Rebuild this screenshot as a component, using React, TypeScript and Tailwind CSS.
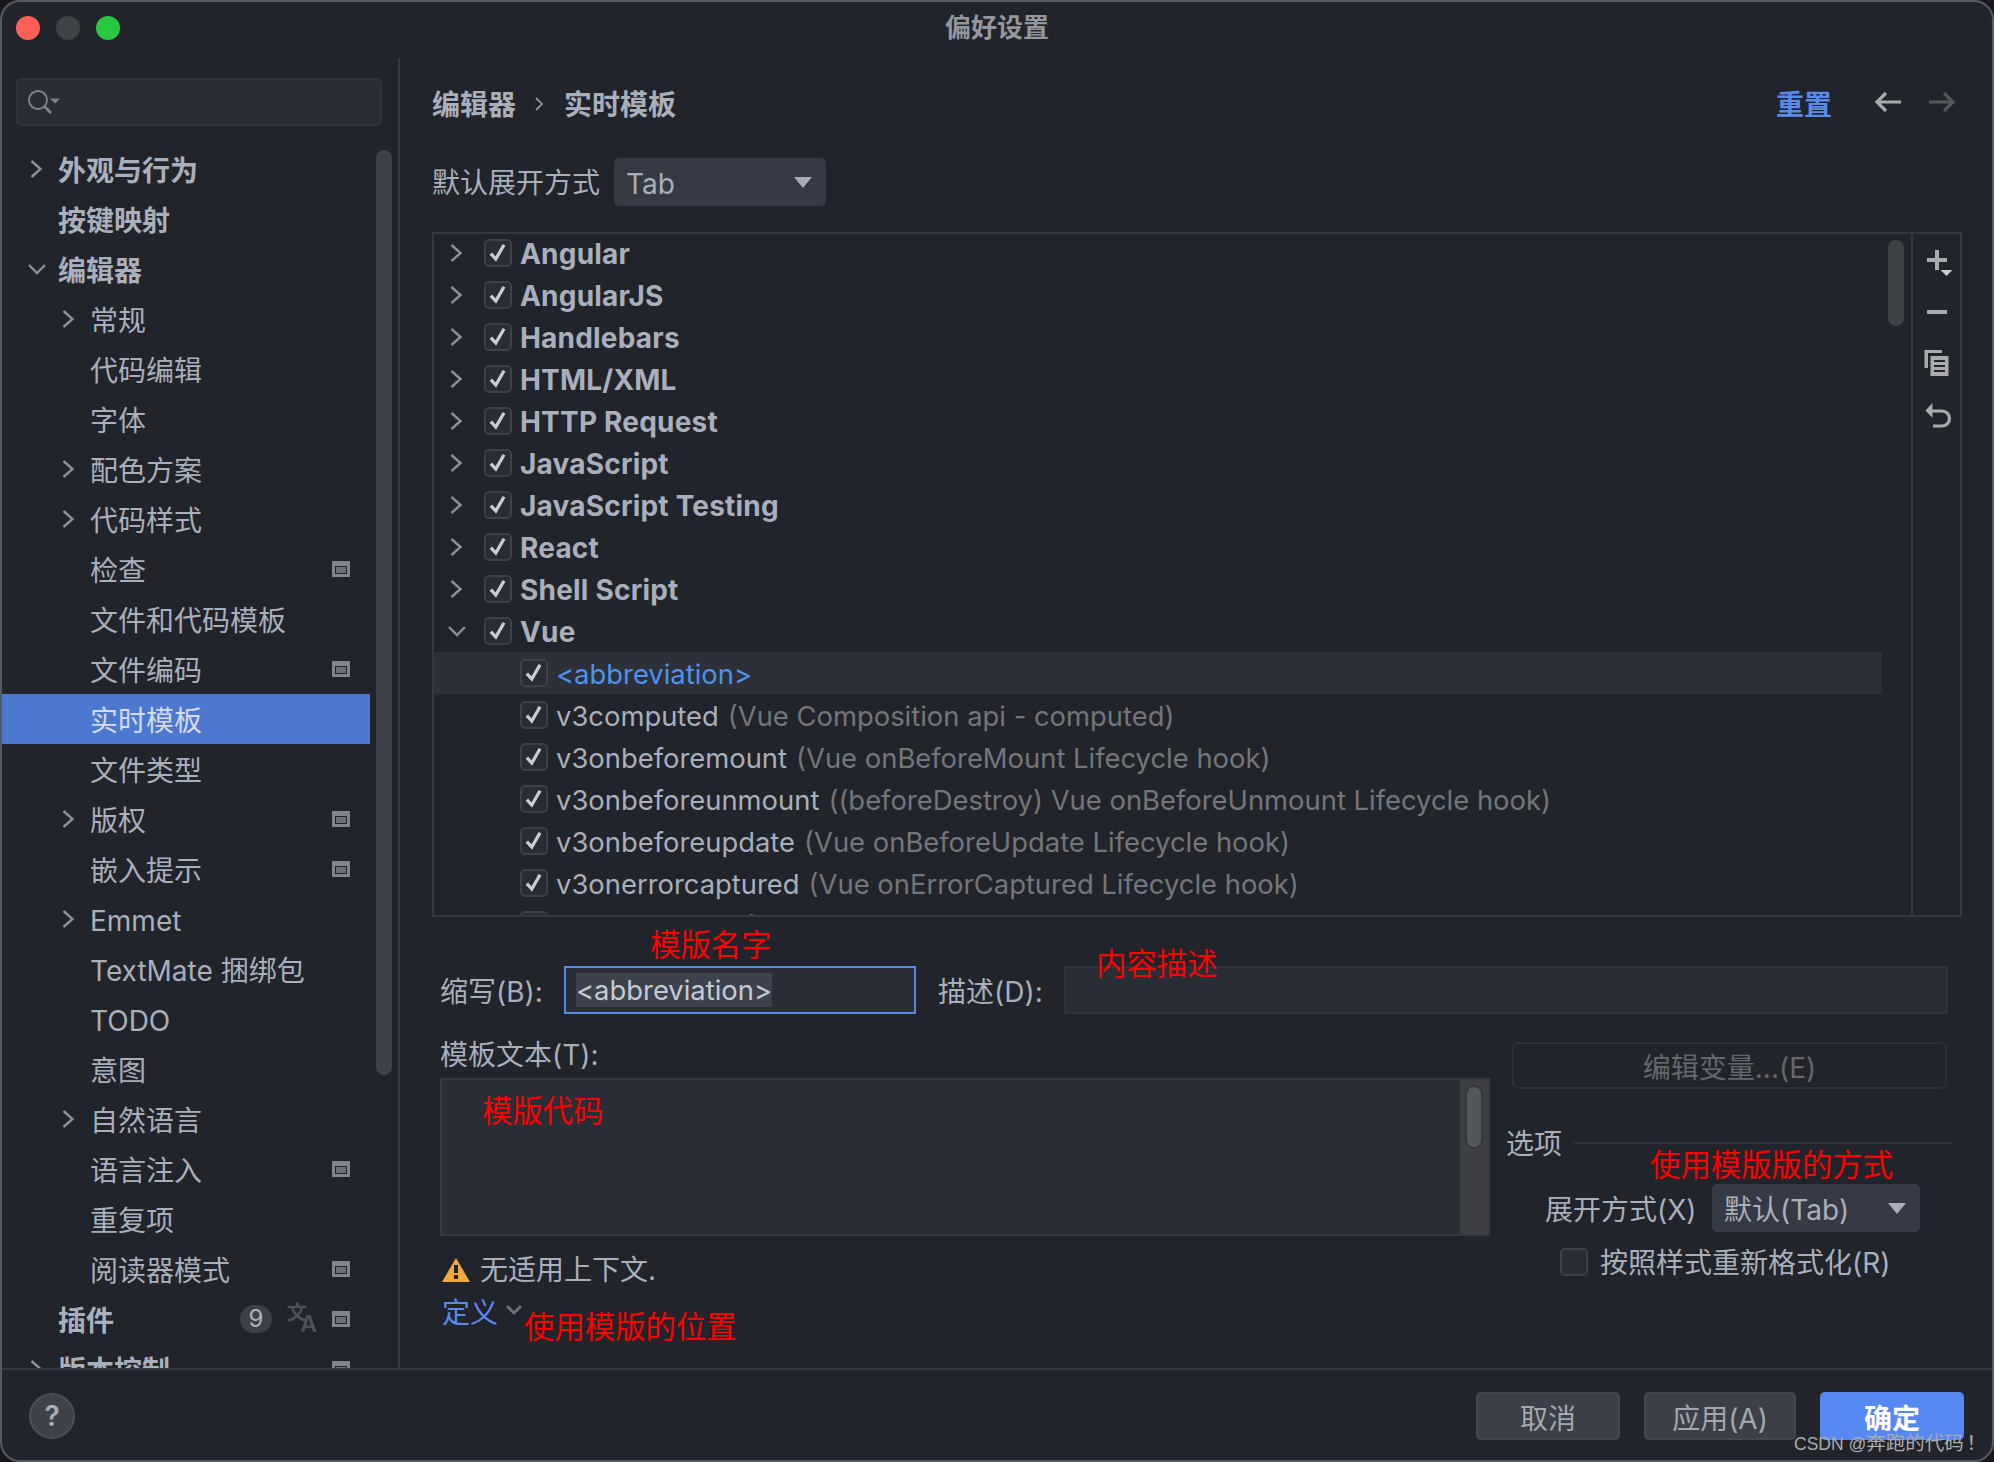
import React from 'react';

const ChevR = ({ c = '#8d9096' }: { c?: string }) => (
  <svg width="20" height="20" viewBox="0 0 20 20" fill="none" stroke={c} strokeWidth="2.4"><path d="M4.5 2 L13.5 10 L4.5 18" /></svg>
);
const ChevD = () => (
  <svg width="20" height="20" viewBox="0 0 20 20" fill="none" stroke="#8d9096" strokeWidth="2.4"><path d="M2 6 L10 14 L18 6" /></svg>
);
const Mark = () => (
  <svg width="18" height="16" viewBox="0 0 18 16"><rect width="18" height="16" fill="#7f848d" /><rect x="3" y="5" width="12" height="8" fill="#21242b" /><rect x="4" y="6" width="10" height="6" fill="#6b707a" /></svg>
);
const Check = ({ on = true }: { on?: boolean }) => (
  <span className="flex h-[28px] w-[28px] shrink-0 items-center justify-center rounded-[5px] border-2 border-[#3c414c] bg-[#282c35]">
    {on && (
      <svg width="22" height="22" viewBox="0 0 20 20" fill="none" stroke="#c8ccd4" strokeWidth="3"><path d="M3.5 10.5 L8 15.5 L15.5 2.5" /></svg>
    )}
  </span>
);
const Tri = () => (
  <svg width="18" height="12" viewBox="0 0 18 12" className="mt-[2px]"><path d="M0 0 H18 L9 11 Z" fill="#a9aeb8" /></svg>
);

type Side = { t: string; l: number; c?: 'r' | 'd'; b?: boolean; m?: boolean; sel?: boolean; extra?: boolean };
const side: Side[] = [
  { t: '外观与行为', l: 0, c: 'r', b: true },
  { t: '按键映射', l: 0, b: true },
  { t: '编辑器', l: 0, c: 'd', b: true },
  { t: '常规', l: 1, c: 'r' },
  { t: '代码编辑', l: 1 },
  { t: '字体', l: 1 },
  { t: '配色方案', l: 1, c: 'r' },
  { t: '代码样式', l: 1, c: 'r' },
  { t: '检查', l: 1, m: true },
  { t: '文件和代码模板', l: 1 },
  { t: '文件编码', l: 1, m: true },
  { t: '实时模板', l: 1, sel: true },
  { t: '文件类型', l: 1 },
  { t: '版权', l: 1, c: 'r', m: true },
  { t: '嵌入提示', l: 1, m: true },
  { t: 'Emmet', l: 1, c: 'r' },
  { t: 'TextMate 捆绑包', l: 1 },
  { t: 'TODO', l: 1 },
  { t: '意图', l: 1 },
  { t: '自然语言', l: 1, c: 'r' },
  { t: '语言注入', l: 1, m: true },
  { t: '重复项', l: 1 },
  { t: '阅读器模式', l: 1, m: true },
  { t: '插件', l: 0, b: true, m: true, extra: true },
  { t: '版本控制', l: 0, c: 'r', b: true, m: true },
];

const groups = ['Angular', 'AngularJS', 'Handlebars', 'HTML/XML', 'HTTP Request', 'JavaScript', 'JavaScript Testing', 'React', 'Shell Script'];
const children: [string, string][] = [
  ['v3computed', '(Vue Composition api - computed)'],
  ['v3onbeforemount', '(Vue onBeforeMount Lifecycle hook)'],
  ['v3onbeforeunmount', '((beforeDestroy) Vue onBeforeUnmount Lifecycle hook)'],
  ['v3onbeforeupdate', '(Vue onBeforeUpdate Lifecycle hook)'],
  ['v3onerrorcaptured', '(Vue onErrorCaptured Lifecycle hook)'],
  ['v3onmounted', '(Vue onMounted Lifecycle hook)'],
];

const Red = ({ className, children: c }: { className: string; children: React.ReactNode }) => (
  <span className={`absolute whitespace-nowrap text-[30.4px] leading-[40px] text-[#ff0000] ${className}`}>{c}</span>
);

export default function App() {
  return (
    <div className="relative h-[1462px] w-[1994px] overflow-hidden bg-[#17181c] font-['Inter','Noto_Sans_CJK_SC',sans-serif] text-[#a9afbb]">
      <div className="flex h-full flex-col overflow-hidden rounded-[20px] border-2 border-[#56595f] bg-[#21242b]">
        {/* title */}
        <div className="grid h-[56px] shrink-0 grid-cols-3 items-center pb-[4px]">
          <div className="flex gap-[16px] pl-[14px]">
            <span className="h-[24px] w-[24px] rounded-full bg-[#ff5f57]" />
            <span className="h-[24px] w-[24px] rounded-full bg-[#404348]" />
            <span className="h-[24px] w-[24px] rounded-full bg-[#28c840]" />
          </div>
          <div className="text-center text-[26px] font-semibold leading-[50px] text-[#94979e]">偏好设置</div>
        </div>

        {/* body */}
        <div className="flex min-h-0 flex-1 border-b-2 border-[#363941]">
          {/* sidebar */}
          <aside className="flex w-[398px] shrink-0 flex-col overflow-hidden border-r-2 border-[#363941]">
            <div className="mx-[14px] mt-[20px] flex h-[48px] w-[366px] shrink-0 items-center rounded-[5px] border-2 border-[#2f333b] bg-[#292d35] pl-[8px]">
              <svg width="36" height="28" viewBox="0 0 36 28" fill="none" stroke="#7f838a" strokeWidth="2">
                <circle cx="12" cy="12" r="9" />
                <path d="M18.5 18.5 L25 25" strokeWidth="2.6" />
                <path d="M24 10.5 H34 L29 15.5 Z" fill="#7f838a" stroke="none" />
              </svg>
            </div>
            <div className="mt-[18px] flex min-h-0 flex-1">
              <div className="w-[368px] shrink-0">
                {side.map((r) => (
                  <div key={r.t} className={`flex h-[50px] items-center text-[28px] ${r.l ? 'pl-[56px]' : 'pl-[24px]'} ${r.sel ? 'bg-[#4c78d0] text-[#d5dbe8]' : ''} ${r.b ? 'font-semibold' : ''}`}>
                    <span className="flex w-[32px] shrink-0 items-center pl-[1px]">
                      {r.c === 'r' && <ChevR />}
                      {r.c === 'd' && <ChevD />}
                    </span>
                    <span className="whitespace-nowrap pt-[3px] leading-[50px]">{r.t}</span>
                    {(r.m || r.extra) && (
                      <span className="ml-auto mr-[20px] flex items-center gap-[16px]">
                        {r.extra && (
                          <>
                            <span className="flex h-[28px] w-[32px] items-center justify-center rounded-full bg-[#3c4048] text-[24px] font-normal text-[#aeb2ba]">9</span>
                            <span className="relative h-[28px] w-[28px] font-semibold text-[#4f525a]">
                              <span className="absolute left-[-1px] top-[-3px] text-[20px] leading-[22px]">文</span>
                              <span className="absolute bottom-[-2px] right-[-1px] text-[23px] leading-[22px]">A</span>
                            </span>
                          </>
                        )}
                        <Mark />
                      </span>
                    )}
                  </div>
                ))}
              </div>
              <div className="ml-[6px] mt-[6px] h-[925px] w-[16px] shrink-0 rounded-full bg-[#3f4247]" />
            </div>
          </aside>

          {/* main */}
          <main className="min-w-0 flex-1 overflow-hidden pl-[32px] pr-[30px]">
            <div className="mt-[26px] flex h-[40px] items-center text-[28px] font-semibold">
              <span className="pt-[2px]">编辑器</span>
              <span className="ml-[13px] mr-[15px] flex w-[20px] justify-center">
                <svg width="12" height="18" viewBox="0 0 12 18" fill="none" stroke="#8d9096" strokeWidth="1.8"><path d="M3 3 L9 9 L3 15" /></svg>
              </span>
              <span className="pt-[2px]">实时模板</span>
              <span className="ml-auto mr-[42px] pt-[2px] text-[#5b8bea]">重置</span>
              <svg width="28" height="22" viewBox="0 0 28 22" fill="none" stroke="#a7a9ad" strokeWidth="3.2" className="mb-[4px] mr-[26px]"><path d="M27 11 H3 M12 2 L3 11 L12 20" /></svg>
              <svg width="28" height="22" viewBox="0 0 28 22" fill="none" stroke="#55575b" strokeWidth="3.2" className="mb-[4px] mr-[6px]"><path d="M1 11 H25 M16 2 L25 11 L16 20" /></svg>
            </div>

            <div className="mt-[34px] flex h-[48px] items-center text-[28px]">
              <span className="w-[182px] shrink-0 whitespace-nowrap pt-[2px]">默认展开方式</span>
              <div className="flex h-[48px] w-[212px] items-center justify-between rounded-[5px] bg-[#363a44] pl-[12px] pr-[14px]">
                <span className="pt-[4px]">Tab</span>
                <Tri />
              </div>
            </div>

            {/* list */}
            <div className="mt-[26px] flex h-[685px] border-2 border-[#363941]">
              <div className="-mt-[2px] w-[1448px] shrink-0 overflow-hidden text-[27.4px]">
                {groups.map((g) => (
                  <div key={g} className="flex h-[42px] items-center pl-[12px] text-[28px] font-bold tracking-[0.2px]">
                    <span className="flex w-[38px] shrink-0 pl-[1px]"><ChevR /></span>
                    <Check />
                    <span className="ml-[8px] whitespace-nowrap pt-[2px]">{g}</span>
                  </div>
                ))}
                <div className="flex h-[42px] items-center pl-[12px] text-[28px] font-bold tracking-[0.2px]">
                  <span className="flex w-[38px] shrink-0 pl-[1px]"><ChevD /></span>
                  <Check />
                  <span className="ml-[8px] pt-[2px]">Vue</span>
                </div>
                <div className="flex h-[42px] items-center bg-[#2d3039] pl-[86px]">
                  <Check />
                  <span className="ml-[8px] pt-[3px] text-[#4f93ee]">&lt;abbreviation&gt;</span>
                </div>
                {children.map(([a, b]) => (
                  <div key={a} className="flex h-[42px] items-center pl-[86px]">
                    <Check />
                    <span className="ml-[8px] whitespace-nowrap pt-[3px]">{a}</span>
                    <span className="ml-[9px] whitespace-nowrap pt-[3px] text-[#74767b]">{b}</span>
                  </div>
                ))}
              </div>
              <div className="ml-[6px] mt-[6px] h-[86px] w-[16px] shrink-0 rounded-full bg-[#3f4247]" />
              <div className="ml-[7px] flex flex-1 flex-col items-center border-l-2 border-[#363941]">
                <svg width="36" height="52" viewBox="0 0 36 52" fill="#a9abaf"><rect x="8" y="24" width="20" height="4" /><rect x="16" y="16" width="4" height="20" /><path d="M21.5 36 H33.5 L27.5 42 Z" fill="#c9cbce" /></svg>
                <svg width="36" height="52" viewBox="0 0 36 52" fill="#a9abaf"><rect x="8" y="24" width="20" height="4" /></svg>
                <svg width="36" height="52" viewBox="0 0 36 52" fill="#a9abaf">
                  <path d="M5.5 12 H23 V15 H9 V30 H5.5 Z" />
                  <rect x="11.5" y="18" width="18" height="20" />
                  <rect x="15" y="22" width="11" height="2" fill="#21242b" />
                  <rect x="15" y="27" width="11" height="2" fill="#21242b" />
                  <rect x="15" y="32" width="11" height="2" fill="#21242b" />
                </svg>
                <svg width="36" height="52" viewBox="0 0 36 52" fill="none" stroke="#a9abaf" strokeWidth="3.2">
                  <path d="M11 21 H23 A7.5 7.5 0 0 1 23 36 H14" />
                  <path d="M13.5 13 L6.5 20.5 L13.5 28 Z" fill="#a9abaf" stroke="none" />
                </svg>
              </div>
            </div>

            {/* abbreviation */}
            <div className="ml-[8px] mt-[49px] flex h-[48px] items-center text-[28px]">
              <span className="w-[124px] shrink-0 whitespace-nowrap pt-[4px]">缩写(B):</span>
              <div className="flex h-[48px] w-[352px] shrink-0 items-center border-2 border-[#5a88e6] bg-[#292d35] pl-[10px]">
                <span className="flex h-[34px] items-center bg-[#3d424d] pt-[2px] text-[27.4px] text-[#c6cad2]">&lt;abbreviation&gt;</span>
              </div>
              <span className="ml-[22px] w-[126px] shrink-0 whitespace-nowrap pt-[4px]">描述(D):</span>
              <div className="h-[48px] w-[884px] shrink-0 border-2 border-[#2f333b] bg-[#292d35]" />
            </div>

            {/* lower */}
            <div className="mt-[22px] flex text-[28px]">
              <div className="ml-[8px] w-[1050px] shrink-0">
                <div className="h-[38px] leading-[38px]">模板文本(T):</div>
                <div className="mt-[4px] flex h-[158px] border-2 border-[#363941] bg-[#292d35]">
                  <div className="flex-1" />
                  <div className="w-[28px] bg-[#3d3f42] pl-[5px] pt-[5px]">
                    <div className="h-[64px] w-[18px] rounded-full border-2 border-[#36383b] bg-[#54575a]" />
                  </div>
                </div>
                <div className="mt-[15px] flex h-[38px] items-center pl-[2px]">
                  <svg width="28" height="24" viewBox="0 0 28 24"><path d="M14 0 L28 24 H0 Z" fill="#f2a93b" /><rect x="12" y="7" width="4" height="8" fill="#21242b" /><rect x="12" y="17" width="4" height="4" fill="#21242b" /></svg>
                  <span className="ml-[10px]">无适用上下文.</span>
                </div>
                <div className="mt-[4px] flex h-[38px] items-center pl-[2px]">
                  <span className="pt-[2px] text-[#5b8bea]">定义</span>
                  <svg width="16" height="12" viewBox="0 0 16 12" fill="none" stroke="#6d7076" strokeWidth="3" className="-mt-[4px] ml-[8px]"><path d="M1 2 L8 9 L15 2" /></svg>
                </div>
              </div>

              <div className="ml-[16px] w-[447px] shrink-0">
                <div className="ml-[6px] mt-[6px] flex h-[47px] w-[435px] items-center justify-center rounded-[6px] border-2 border-[#2d3037] pt-[5px] text-[#64676d]">编辑变量...(E)</div>
                <div className="mt-[35px] flex h-[38px] items-center">
                  <span className="whitespace-nowrap pt-[2px]">选项</span>
                  <span className="ml-[12px] h-[2px] flex-1 bg-[#30333a]" />
                </div>
                <div className="ml-[39px] mt-[22px] flex h-[48px] items-center">
                  <span className="w-[167px] shrink-0 whitespace-nowrap pt-[4px]">展开方式(X)</span>
                  <div className="flex h-[48px] w-[208px] items-center justify-between rounded-[5px] bg-[#363a44] pl-[12px] pr-[14px]">
                    <span className="pt-[4px]">默认(Tab)</span>
                    <Tri />
                  </div>
                </div>
                <div className="ml-[54px] mt-[15px] flex h-[30px] items-center">
                  <Check on={false} />
                  <span className="ml-[12px] whitespace-nowrap pt-[2px]">按照样式重新格式化(R)</span>
                </div>
              </div>
            </div>
          </main>
        </div>

        {/* footer */}
        <footer className="flex h-[90px] shrink-0 items-start justify-between pl-[27px] pr-[28px] pt-[22px] text-[28px]">
          <div className="mt-[1px] flex h-[46px] w-[46px] items-center justify-center rounded-full border-2 border-[#4a4e56] bg-[#3e4249] font-semibold text-[#a9adb4]">?</div>
          <div className="flex gap-[24px]">
            <div className="flex h-[48px] w-[144px] items-center justify-center rounded-[5px] border-2 border-[#44474f] bg-[#3c3f47] pt-[6px] text-[#a3a7af]">取消</div>
            <div className="flex h-[48px] w-[152px] items-center justify-center rounded-[5px] border-2 border-[#44474f] bg-[#3c3f47] pt-[6px] text-[#a3a7af]">应用(A)</div>
            <div className="flex h-[48px] w-[144px] items-center justify-center rounded-[5px] bg-[#5588f1] pt-[6px] font-semibold text-white">确定</div>
          </div>
        </footer>
      </div>

      {/* annotations */}
      <Red className="left-[650px] top-[925px]">模版名字</Red>
      <Red className="left-[1096px] top-[944px]">内容描述</Red>
      <Red className="left-[482px] top-[1091px]">模版代码</Red>
      <Red className="left-[524px] top-[1307px]">使用模版的位置</Red>
      <Red className="left-[1650px] top-[1145px]">使用模版版的方式</Red>
      <span className="absolute left-[1794px] top-[1431px] whitespace-nowrap font-['Liberation_Sans','Noto_Sans_CJK_SC',sans-serif] text-[19.5px] leading-[24px] text-[#adadad]"><span className="text-[17.5px]">CSDN @</span>奔跑的代码<span className="text-[10px]"> </span>！</span>
    </div>
  );
}
